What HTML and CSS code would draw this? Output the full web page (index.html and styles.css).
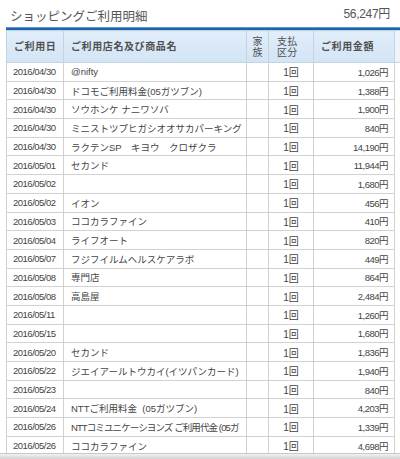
FILE: index.html
```html
<!DOCTYPE html>
<html lang="ja">
<head>
<meta charset="utf-8">
<link rel="stylesheet" href="styles.css">
</head>
<body>
<div class="page">
  <div class="titlebar">
    <h1 class="title">ショッピングご利用明細</h1>
    <div class="total">56,247円</div>
  </div>
  <div class="wrap">
    <table class="tbl">
      <colgroup>
        <col class="c-date"><col class="c-name"><col class="c-fam"><col class="c-pay"><col class="c-amt"><col class="c-extra">
      </colgroup>
      <thead>
        <tr>
          <th class="h-date">ご利用日</th>
          <th class="h-name">ご利用店名及び商品名</th>
          <th class="h-fam">家<br>族</th>
          <th class="h-pay">支払<br>区分</th>
          <th class="h-amt">ご利用金額</th>
          <th class="h-extra"></th>
        </tr>
      </thead>
      <tbody>
        <tr><td class="d">2016/04/30</td><td class="n">@nifty</td><td></td><td class="p">1回</td><td class="a">1,026円</td><td class="x"></td></tr>
        <tr><td class="d">2016/04/30</td><td class="n">ドコモご利用料金(05ガツブン)</td><td></td><td class="p">1回</td><td class="a">1,388円</td><td class="x"></td></tr>
        <tr><td class="d">2016/04/30</td><td class="n">ソウホンケ ナニワソバ</td><td></td><td class="p">1回</td><td class="a">1,900円</td><td class="x"></td></tr>
        <tr><td class="d">2016/04/30</td><td class="n">ミニストツプヒガシオオサカパーキング</td><td></td><td class="p">1回</td><td class="a">840円</td><td class="x"></td></tr>
        <tr><td class="d">2016/04/30</td><td class="n">ラクテンSP　キヨウ　クロザクラ</td><td></td><td class="p">1回</td><td class="a">14,190円</td><td class="x"></td></tr>
        <tr><td class="d">2016/05/01</td><td class="n">セカンド</td><td></td><td class="p">1回</td><td class="a">11,944円</td><td class="x"></td></tr>
        <tr><td class="d">2016/05/02</td><td class="n"></td><td></td><td class="p">1回</td><td class="a">1,680円</td><td class="x"></td></tr>
        <tr><td class="d">2016/05/02</td><td class="n">イオン</td><td></td><td class="p">1回</td><td class="a">456円</td><td class="x"></td></tr>
        <tr><td class="d">2016/05/03</td><td class="n">ココカラファイン</td><td></td><td class="p">1回</td><td class="a">410円</td><td class="x"></td></tr>
        <tr><td class="d">2016/05/04</td><td class="n">ライフオート</td><td></td><td class="p">1回</td><td class="a">820円</td><td class="x"></td></tr>
        <tr><td class="d">2016/05/07</td><td class="n">フジフイルムヘルスケアラボ</td><td></td><td class="p">1回</td><td class="a">449円</td><td class="x"></td></tr>
        <tr><td class="d">2016/05/08</td><td class="n">専門店</td><td></td><td class="p">1回</td><td class="a">864円</td><td class="x"></td></tr>
        <tr><td class="d">2016/05/08</td><td class="n">高島屋</td><td></td><td class="p">1回</td><td class="a">2,484円</td><td class="x"></td></tr>
        <tr><td class="d">2016/05/11</td><td class="n"></td><td></td><td class="p">1回</td><td class="a">1,260円</td><td class="x"></td></tr>
        <tr><td class="d">2016/05/15</td><td class="n"></td><td></td><td class="p">1回</td><td class="a">1,680円</td><td class="x"></td></tr>
        <tr><td class="d">2016/05/20</td><td class="n">セカンド</td><td></td><td class="p">1回</td><td class="a">1,836円</td><td class="x"></td></tr>
        <tr><td class="d">2016/05/22</td><td class="n">ジエイアールトウカイ(イツパンカード)</td><td></td><td class="p">1回</td><td class="a">1,940円</td><td class="x"></td></tr>
        <tr><td class="d">2016/05/23</td><td class="n"></td><td></td><td class="p">1回</td><td class="a">840円</td><td class="x"></td></tr>
        <tr><td class="d">2016/05/24</td><td class="n">NTTご利用料金  (05ガツブン)</td><td></td><td class="p">1回</td><td class="a">4,203円</td><td class="x"></td></tr>
        <tr><td class="d">2016/05/26</td><td class="n tight">NTTコミユニケーシヨンズ ご利用代金 (05ガ</td><td></td><td class="p">1回</td><td class="a">1,339円</td><td class="x"></td></tr>
        <tr><td class="d">2016/05/26</td><td class="n">ココカラファイン</td><td></td><td class="p">1回</td><td class="a">4,698円</td><td class="x"></td></tr>
      </tbody>
    </table>
  </div>
  <div class="scrollbar"></div>
</div>
</body>
</html>
```
FILE: styles.css
```css
html, body {
  margin: 0;
  padding: 0;
  background: #ffffff;
}
.page {
  width: 400px;
  height: 459px;
  overflow: hidden;
  position: relative;
  font-family: "Liberation Sans", "Noto Sans CJK JP", sans-serif;
  color: #444444;
}
.titlebar {
  height: 28px;
  display: flex;
  align-items: center;
  justify-content: space-between;
  padding: 0 10px 0 10px;
  box-sizing: border-box;
}
.title {
  margin: 0;
  font-size: 12.5px;
  font-weight: normal;
  color: #555555;
  letter-spacing: 0;
  padding-top: 2px;
}
.total {
  font-size: 12px;
  color: #555555;
  letter-spacing: -0.3px;
  padding-bottom: 4px;
}
.wrap {
  margin-left: 6px;
  width: 420px;
  border-top: 2px solid #1e64a8;
  box-shadow: 0 -1px 0 #5f97cc;
}
.tbl {
  border-collapse: collapse;
  table-layout: fixed;
  width: 408px;
}
.c-date { width: 57px; }
.c-name { width: 183px; }
.c-fam { width: 22px; }
.c-pay { width: 45px; }
.c-amt { width: 81px; }
.c-extra { width: 20px; }
th, td {
  border: 1px solid #d2d2d2;
  padding: 0;
  overflow: hidden;
  white-space: pre;
}
thead th {
  height: 31px;
  background: linear-gradient(#e2eefa, #d2e4f5);
  font-size: 10px;
  font-weight: bold;
  color: #505050;
  text-align: left;
  line-height: 11px;
  border-color: #c4d3e2;
  letter-spacing: 0.6px;
}
.h-date { padding-left: 7px; }
.h-name { padding-left: 7px; }
.h-fam { text-align: center !important; font-weight: normal !important; letter-spacing: 0 !important; }
.h-pay { padding-left: 8px; font-weight: normal !important; letter-spacing: 0.3px !important; }
.h-amt { padding-left: 7px; }
.h-extra { background: #eef4fa !important; }
tbody td {
  height: 17.7px;
  font-size: 9.5px;
  color: #444444;
}
.d { padding-left: 6px; letter-spacing: -0.5px; }
.n { padding-left: 7px; letter-spacing: 0; }
.n.tight { letter-spacing: -0.9px; }
.p { text-align: center; font-size: 10px; }
.a { text-align: right; padding-right: 6px; letter-spacing: -0.5px; }
.x { border-top: none; border-bottom: none; border-right: none; }
.scrollbar {
  position: absolute;
  left: 0;
  right: 0;
  bottom: 0;
  height: 5px;
  background: linear-gradient(#f2f2f2, #d4d4d4);
  border-top: 1px solid #c8c8c8;
}
```
